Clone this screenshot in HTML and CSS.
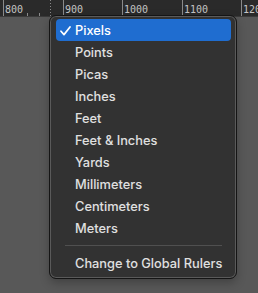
FILE: index.html
```html
<!DOCTYPE html>
<html>
<head>
<meta charset="utf-8">
<link rel="stylesheet" href="styles.css">
</head>
<body>
<div class="stage">
  <svg class="ruler" width="258" height="17" viewBox="0 0 258 17">
    <rect x="0" y="0" width="258" height="16" fill="#2a2a2a"/>
    <rect x="0" y="16" width="258" height="1" fill="#3a3a3a"/>
    <g stroke="#8a8a8a" stroke-width="1">
      <line x1="3.5" y1="0" x2="3.5" y2="16"/>
      <line x1="63.5" y1="0" x2="63.5" y2="16"/>
      <line x1="122.5" y1="0" x2="122.5" y2="16"/>
      <line x1="182.5" y1="0" x2="182.5" y2="16"/>
      <line x1="241.5" y1="0" x2="241.5" y2="16"/>
      <line x1="27.5" y1="13" x2="27.5" y2="16"/>
      <line x1="39.5" y1="13" x2="39.5" y2="16"/>
    </g>
    <line x1="50.5" y1="0" x2="50.5" y2="16" stroke="#8a8a8a" stroke-width="1" stroke-dasharray="1 2"/>
    <g class="rl">
      <text x="5" y="12.5">800</text>
      <text x="65" y="12.5">900</text>
      <text x="124" y="12.5">1000</text>
      <text x="184" y="12.5">1100</text>
      <text x="243" y="12.5">1200</text>
    </g>
  </svg>
  <div class="menu">
    <div class="item active">
      <svg class="check" width="11" height="10" viewBox="0 0 11 10"><path d="M1 5.2 L4 8.6 L10 1" fill="none" stroke="#fff" stroke-width="1.7" stroke-linecap="round" stroke-linejoin="round"/></svg>
      <span>Pixels</span>
    </div>
    <div class="item"><span>Points</span></div>
    <div class="item"><span>Picas</span></div>
    <div class="item"><span>Inches</span></div>
    <div class="item"><span>Feet</span></div>
    <div class="item"><span>Feet &amp; Inches</span></div>
    <div class="item"><span>Yards</span></div>
    <div class="item"><span>Millimeters</span></div>
    <div class="item"><span>Centimeters</span></div>
    <div class="item"><span>Meters</span></div>
    <div class="sep"></div>
    <div class="item"><span>Change to Global Rulers</span></div>
  </div>
</div>
</body>
</html>
```
FILE: styles.css
```css
html, body {
  margin: 0;
  padding: 0;
}
body {
  width: 258px;
  height: 293px;
  overflow: hidden;
  background: #585858;
}
.stage {
  position: relative;
  width: 258px;
  height: 293px;
}
.ruler {
  display: block;
}
.rl text {
  font-family: "DejaVu Sans Mono", monospace;
  font-size: 10px;
  fill: #c4c4c4;
}
.menu {
  position: absolute;
  left: 49px;
  top: 15px;
  box-sizing: border-box;
  width: 188px;
  border: 1px solid #151515;
  border-radius: 7px;
  background: #323232;
  box-shadow: inset 0 0 0 1px #5a5a5a, 0 4px 10px rgba(0,0,0,0.25);
  padding: 3px 5px 4px 6px;
  font-family: Inter, "Noto Sans", sans-serif;
  font-size: 12.8px;
  font-weight: 500;
  color: #e0e0e0;
}
.item {
  position: relative;
  height: 22px;
  display: flex;
  align-items: center;
  padding-left: 19px;
  padding-top: 1px;
  box-sizing: border-box;
  border-radius: 4px;
}
.item.active {
  background: #1f6dd0;
  color: #ffffff;
}
.check {
  position: absolute;
  left: 4px;
  top: 7px;
}
.sep {
  height: 1px;
  margin: 6px 9px;
  background: #505050;
}
```
